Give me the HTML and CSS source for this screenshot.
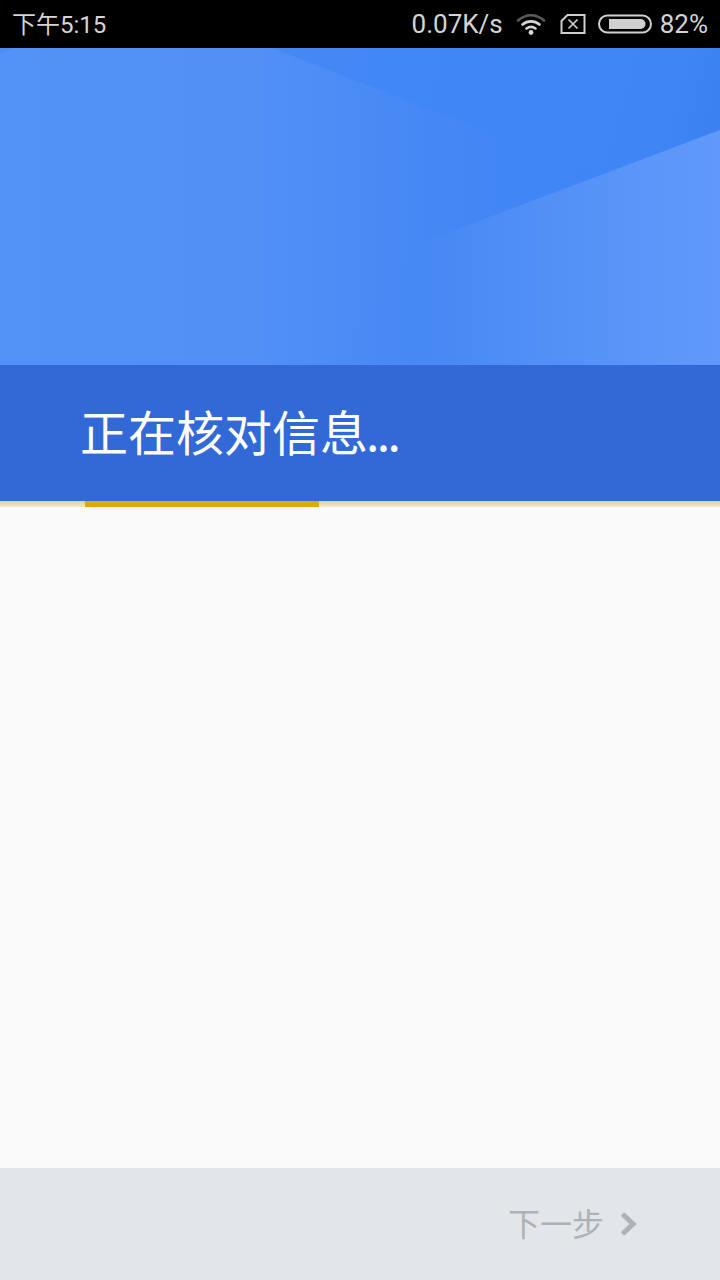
FILE: index.html
```html
<!DOCTYPE html>
<html lang="zh-CN">
<head>
    <meta charset="UTF-8">
    <meta name="viewport" content="width=device-width, initial-scale=1.0">
    <title>正在核对信息</title>
    <link rel="stylesheet" href="styles.css">
</head>
<body>
    <div class="screen">
        <!-- Status bar -->
        <div class="status-bar">
            <span class="clock">下午5:15</span>
            <div class="status-right">
                <span class="speed">0.07K/s</span>
                <svg class="icon-wifi" width="30" height="24" viewBox="0 0 30 24" fill="none" stroke-linecap="round">
                    <path d="M2 8.5C10 1.5 20 1.5 28 8.5" stroke="#5c5c5c" stroke-width="2.6"></path>
                    <path d="M6.5 12.5C11.5 8.3 18.5 8.3 23.5 12.5" stroke="#d6d6d6" stroke-width="2.6"></path>
                    <path d="M10.5 16.5C13.3 14.4 16.7 14.4 19.5 16.5" stroke="#d6d6d6" stroke-width="2.6"></path>
                    <circle cx="15" cy="20.5" r="2.4" fill="#d6d6d6"></circle>
                </svg>
                <svg class="icon-sim" width="26" height="22" viewBox="0 0 26 22" fill="none" stroke="#d0d0d0">
                    <path d="M7.5 2H24.5V20H1.5V8Z" stroke-width="2"></path>
                    <path d="M8.5 6.5L17.5 15.5M17.5 6.5L8.5 15.5" stroke-width="1.7"></path>
                </svg>
                <svg class="icon-battery" width="54" height="20" viewBox="0 0 54 20" fill="none">
                    <rect x="1" y="1.5" width="52" height="17" rx="8.5" stroke="#d0d0d0" stroke-width="2"></rect>
                    <path d="M11 5H42.5A5 5 0 0 1 42.5 15H11Z" fill="#d0d0d0"></path>
                </svg>
                <span class="percent">82%</span>
            </div>
        </div>

        <!-- Header artwork -->
        <div class="hero">
            <svg class="hero-art" viewBox="0 0 720 317" preserveAspectRatio="none">
                <defs>
                    <linearGradient id="baseFill" gradientUnits="userSpaceOnUse" x1="0" y1="0" x2="720" y2="0">
                        <stop offset="0" stop-color="#5392f7"></stop>
                        <stop offset="0.35" stop-color="#5290f6"></stop>
                        <stop offset="0.62" stop-color="#4487f5"></stop>
                        <stop offset="0.82" stop-color="#3f85f6"></stop>
                    </linearGradient>
                    <linearGradient id="topFill" gradientUnits="userSpaceOnUse" x1="272" y1="0" x2="720" y2="120">
                        <stop offset="0" stop-color="#4589f5"></stop>
                        <stop offset="0.4" stop-color="#4086f6"></stop>
                        <stop offset="0.85" stop-color="#3f85f6"></stop>
                        <stop offset="1" stop-color="#3c80ee"></stop>
                    </linearGradient>
                    <linearGradient id="lowFill" gradientUnits="userSpaceOnUse" x1="330" y1="0" x2="720" y2="0">
                        <stop offset="0" stop-color="#4c8cf6"></stop>
                        <stop offset="0.22" stop-color="#4688f5"></stop>
                        <stop offset="0.36" stop-color="#4a8bf5"></stop>
                        <stop offset="0.62" stop-color="#5592f7"></stop>
                        <stop offset="1" stop-color="#6099fb"></stop>
                    </linearGradient>
                </defs>
                <rect width="720" height="317" fill="url(#baseFill)"></rect>
                <polygon points="272,0 720,0 720,82 599,127" fill="url(#topFill)"></polygon>
                <polygon points="0,0 12,0 0,6" fill="#4a8bf5"></polygon>
                <polygon points="415,197 720,82 720,317 330,317" fill="url(#lowFill)"></polygon>
            </svg>
        </div>

        <div class="title-bar">
            <h1>正在核对信息<span class="dots">...</span></h1>
        </div>

        <div class="progress">
            <div class="progress-fill"></div>
        </div>

        <div class="content"></div>

        <div class="footer">
            <span class="next">下一步</span>
            <svg class="chevron" width="18" height="26" viewBox="0 0 18 26" fill="none">
                <path d="M3.5 3L14 13L3.5 23" stroke="#aeb2b5" stroke-width="5"></path>
            </svg>
        </div>
    </div>
</body>
</html>
```

FILE: styles.css
```css
/* General Styling */
html, body {
    margin: 0;
    padding: 0;
    height: 100%;
}

body {
    font-family: "Noto Sans CJK SC", Roboto, sans-serif;
    background-color: #fafafa;
}

.screen {
    display: flex;
    flex-direction: column;
    width: 720px;
    height: 1280px;
    overflow: hidden;
}

/* Status Bar */
.status-bar {
    display: flex;
    justify-content: space-between;
    align-items: center;
    flex: none;
    height: 48px;
    padding: 0 12px;
    box-sizing: border-box;
    background-color: #000;
    color: #d4d4d4;
}

.clock {
    padding-bottom: 3px;
    font-family: Roboto, "Noto Sans CJK SC", sans-serif;
    font-size: 24px;
}

.status-right {
    display: flex;
    align-items: center;
}

.speed,
.percent {
    font-family: Roboto, sans-serif;
    font-size: 26px;
}

.icon-wifi {
    margin-left: 13px;
}

.icon-sim {
    margin-left: 14px;
}

.icon-battery {
    margin-left: 12px;
}

.percent {
    margin-left: 8px;
}

/* Header */
.hero {
    position: relative;
    flex: none;
    height: 317px;
}

.hero-art {
    display: block;
    width: 100%;
    height: 100%;
}

.title-bar {
    display: flex;
    align-items: center;
    flex: none;
    height: 136px;
    padding: 0 0 6px 80px;
    box-sizing: border-box;
    background-color: #3269d6;
}

.title-bar h1 {
    margin: 0;
    color: #fff;
    font-size: 48px;
    font-weight: 400;
    line-height: 1;
}

.dots {
    margin-left: -2px;
    letter-spacing: -2.6px;
}

/* Progress */
.progress {
    flex: none;
    height: 6px;
    background: linear-gradient(#e3cfa0, #f4e8cd);
}

.progress-fill {
    width: 234px;
    height: 100%;
    margin-left: 85px;
    background-color: #e3a60b;
}

.content {
    flex: 1;
    background-color: #fafafa;
}

/* Footer */
.footer {
    display: flex;
    justify-content: flex-end;
    align-items: center;
    flex: none;
    height: 112px;
    padding-right: 83px;
    box-sizing: border-box;
    background-color: #e2e6e9;
}

.next {
    padding-bottom: 4px;
    color: #aeb2b5;
    font-size: 32px;
}

.chevron {
    margin-left: 15px;
}
```
